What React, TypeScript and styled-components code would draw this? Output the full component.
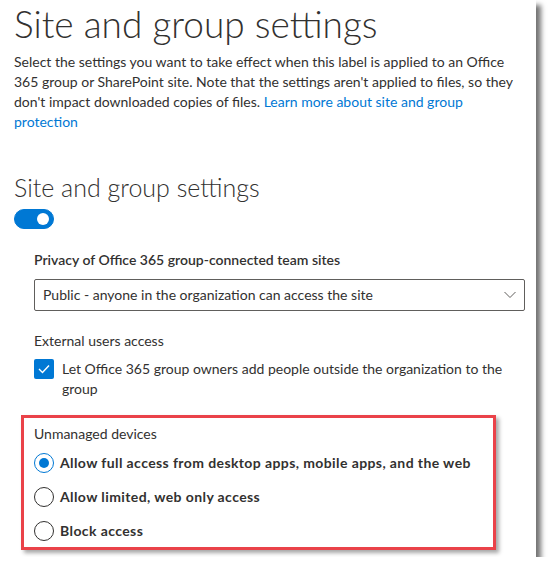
import React from 'react';
import styled, { createGlobalStyle } from 'styled-components';

const GlobalStyle = createGlobalStyle`
  body {
    margin: 0;
    background: #ffffff;
    font-family: Lato, "Liberation Sans", sans-serif;
    color: #323130;
  }
`;

const Panel = styled.div`
  box-sizing: border-box;
  width: 536px;
  height: 557px;
  padding: 2px 11px 0 14px;
  background: #ffffff;
  box-shadow: 5px 5px 5px rgba(0, 0, 0, 0.55);
`;

const Title = styled.h1`
  margin: 0;
  font-size: 37px;
  line-height: 44px;
  font-weight: 300;
`;

const Description = styled.p`
  margin: 6px 0 0;
  font-size: 14px;
  line-height: 20px;
`;

const Link = styled.a`
  color: #0078d4;
  text-decoration: none;
`;

const SectionTitle = styled.h2`
  margin: 39px 0 0;
  font-size: 25px;
  line-height: 32px;
  font-weight: 300;
`;

const Toggle = styled.div<{ $on: boolean }>`
  position: relative;
  box-sizing: border-box;
  width: 40px;
  height: 20px;
  margin-top: 6px;
  border-radius: 10px;
  background: ${(p) => (p.$on ? '#0078d4' : '#ffffff')};
  border: 1px solid ${(p) => (p.$on ? '#0078d4' : '#605e5c')};

  &::after {
    content: '';
    position: absolute;
    top: 3px;
    left: ${(p) => (p.$on ? '22px' : '3px')};
    width: 12px;
    height: 12px;
    border-radius: 50%;
    background: ${(p) => (p.$on ? '#ffffff' : '#605e5c')};
  }
`;

const Settings = styled.div`
  margin-top: 21px;
  padding-left: 20px;
`;

const FieldLabel = styled.div<{ $gap?: number; $weight?: number }>`
  margin-top: ${(p) => p.$gap ?? 0}px;
  font-size: 14px;
  line-height: 20px;
  font-weight: ${(p) => p.$weight ?? 400};
`;

const Dropdown = styled.div`
  box-sizing: border-box;
  display: flex;
  align-items: center;
  justify-content: space-between;
  height: 32px;
  margin-top: 9px;
  padding: 0 8px 0 8px;
  border: 1px solid #605e5c;
  border-radius: 2px;
  font-size: 14px;
  line-height: 20px;
`;

const CheckRow = styled.div`
  display: flex;
  align-items: flex-start;
  gap: 8px;
  margin-top: 8px;
  font-size: 14px;
  line-height: 20px;
`;

const CheckBox = styled.div`
  flex: none;
  display: flex;
  align-items: center;
  justify-content: center;
  width: 20px;
  height: 20px;
  border-radius: 2px;
  background: #0078d4;
`;

const Highlight = styled.div`
  box-sizing: border-box;
  width: 475px;
  margin: 16px 0 0 -13px;
  padding: 6px 10px 6px 10px;
  border: 3px solid #ea4249;
  box-shadow: 3px 3px 4px rgba(0, 0, 0, 0.35);
`;

const Options = styled.div`
  display: flex;
  flex-direction: column;
  gap: 14px;
  margin-top: 9px;
`;

const Option = styled.label`
  display: flex;
  align-items: center;
  gap: 6px;
  font-size: 14px;
  line-height: 20px;
  font-weight: 700;
  letter-spacing: 0.4px;
`;

const Radio = styled.span<{ $checked: boolean }>`
  box-sizing: border-box;
  flex: none;
  position: relative;
  width: 20px;
  height: 20px;
  border-radius: 50%;
  border: 1px solid ${(p) => (p.$checked ? '#0078d4' : '#323130')};

  &::after {
    content: '';
    display: ${(p) => (p.$checked ? 'block' : 'none')};
    position: absolute;
    top: 4px;
    left: 4px;
    width: 10px;
    height: 10px;
    border-radius: 50%;
    background: #0078d4;
  }
`;

const options = [
  { id: 'full', text: 'Allow full access from desktop apps, mobile apps, and the web', checked: true },
  { id: 'limited', text: 'Allow limited, web only access', checked: false },
  { id: 'block', text: 'Block access', checked: false },
];

export default function App() {
  return (
    <>
      <GlobalStyle />
      <Panel>
        <Title>Site and group settings</Title>
        <Description>
          Select the settings you want to take effect when this label is applied to an Office 365 group or
          SharePoint site. Note that the settings aren't applied to files, so they don't impact downloaded copies
          of files. <Link href="#">Learn more about site and group protection</Link>
        </Description>

        <SectionTitle>Site and group settings</SectionTitle>
        <Toggle $on />

        <Settings>
          <FieldLabel $weight={600}>Privacy of Office 365 group-connected team sites</FieldLabel>
          <Dropdown>
            <span>Public - anyone in the organization can access the site</span>
            <svg width="12" height="8" viewBox="0 0 12 8">
              <path d="M0.5 1 L6 6.5 L11.5 1" fill="none" stroke="#605e5c" strokeWidth="1" />
            </svg>
          </Dropdown>

          <FieldLabel $gap={20}>External users access</FieldLabel>
          <CheckRow>
            <CheckBox>
              <svg width="12" height="10" viewBox="0 0 12 10">
                <path d="M1 5 L4.5 8.5 L11 1.5" fill="none" stroke="#ffffff" strokeWidth="1.4" />
              </svg>
            </CheckBox>
            <span>Let Office 365 group owners add people outside the organization to the group</span>
          </CheckRow>

          <Highlight>
            <FieldLabel>Unmanaged devices</FieldLabel>
            <Options>
              {options.map((o) => (
                <Option key={o.id}>
                  <Radio $checked={o.checked} />
                  {o.text}
                </Option>
              ))}
            </Options>
          </Highlight>
        </Settings>
      </Panel>
    </>
  );
}
